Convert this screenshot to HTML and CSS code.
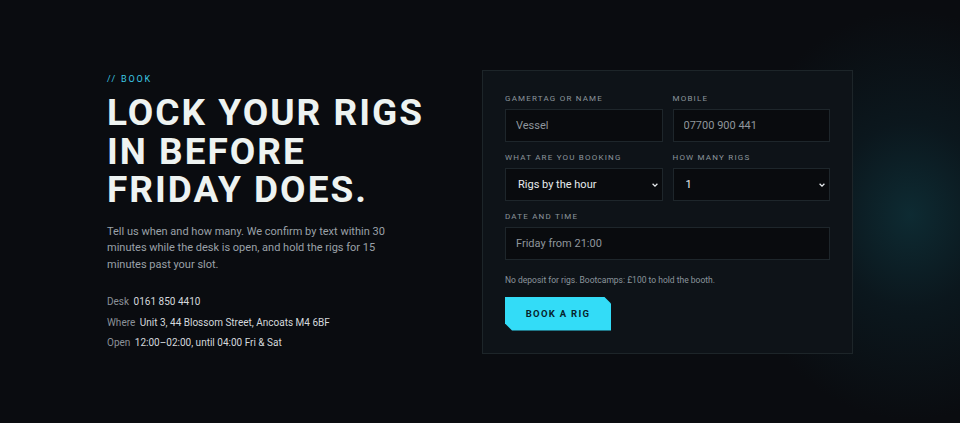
FILE: index.html
```html
<!DOCTYPE html>
<html lang="en">
<head>
    <meta charset="UTF-8">
    <meta name="viewport" content="width=device-width, initial-scale=1.0">
    <title>Book a rig</title>
    <link rel="stylesheet" href="styles.css">
</head>
<body>

<section class="booking">
    <div class="intro">
        <p class="eyebrow">// Book</p>
        <h1>Lock your rigs<br>in before<br>Friday does.</h1>
        <p class="lead">Tell us when and how many. We confirm by text within 30 minutes while the desk is open, and hold the rigs for 15 minutes past your slot.</p>
        <ul class="details">
            <li><span class="key">Desk</span> 0161 850 4410</li>
            <li><span class="key">Where</span> Unit 3, 44 Blossom Street, Ancoats M4 6BF</li>
            <li><span class="key">Open</span> 12:00–02:00, until 04:00 Fri &amp; Sat</li>
        </ul>
    </div>

    <form class="card" onsubmit="return false;">
        <div class="row">
            <label class="field">
                <span class="label">Gamertag or name</span>
                <input type="text" placeholder="Vessel">
            </label>
            <label class="field">
                <span class="label">Mobile</span>
                <input type="tel" placeholder="07700 900 441">
            </label>
        </div>
        <div class="row">
            <label class="field">
                <span class="label">What are you booking</span>
                <span class="select">
                    <select>
                        <option>Rigs by the hour</option>
                        <option>Bootcamp booth</option>
                    </select>
                    <svg viewBox="0 0 10 10" width="8" height="8"><path d="M2 3.5 L5 6.5 L8 3.5" fill="none" stroke="#e8ecef" stroke-width="1.6"/></svg>
                </span>
            </label>
            <label class="field">
                <span class="label">How many rigs</span>
                <span class="select">
                    <select>
                        <option>1</option>
                        <option>2</option>
                        <option>3</option>
                        <option>4</option>
                        <option>5</option>
                    </select>
                    <svg viewBox="0 0 10 10" width="8" height="8"><path d="M2 3.5 L5 6.5 L8 3.5" fill="none" stroke="#e8ecef" stroke-width="1.6"/></svg>
                </span>
            </label>
        </div>
        <label class="field">
            <span class="label">Date and time</span>
            <input type="text" placeholder="Friday from 21:00">
        </label>
        <p class="note">No deposit for rigs. Bootcamps: £100 to hold the booth.</p>
        <button class="button" type="submit">Book a rig</button>
    </form>
</section>

</body>
</html>
```

FILE: styles.css
```css
html, body {
    height: 100%;
}

body {
    font-family: 'Roboto', sans-serif;
    background-color: #0a0c10;
    background-image: radial-gradient(ellipse 175px 205px at 910px 215px, rgba(14, 46, 54, 0.9) 0, rgba(12, 32, 40, 0.55) 45%, rgba(10, 12, 16, 0) 100%);
    color: #e8ecef;
    margin: 0;
    padding: 0;
}

.booking {
    box-sizing: border-box;
    height: 100%;
    max-width: 746px;
    margin: 0 auto;
    display: grid;
    grid-template-columns: 1fr 371px;
    gap: 56px;
    align-items: center;
}

.eyebrow {
    margin: 0 0 9px;
    color: #3cc8e4;
    font-size: 9px;
    line-height: 12px;
    letter-spacing: 1.8px;
    text-transform: uppercase;
}

h1 {
    margin: 0;
    font-family: 'Roboto', sans-serif;
    font-weight: 700;
    font-size: 37px;
    line-height: 38.5px;
    letter-spacing: 2px;
    text-transform: uppercase;
    color: #eef3f1;
}

.lead {
    margin: 14px 0 22px;
    max-width: 282px;
    font-size: 11px;
    line-height: 16.5px;
    color: #9aa1a8;
}

.details {
    list-style: none;
    margin: 0;
    padding: 0;
    font-size: 10px;
    color: #d4d8dc;
}

.details li {
    margin-top: 7px;
    line-height: 13.5px;
}

.details li:first-child {
    margin-top: 0;
}

.details .key {
    color: #8a9198;
    margin-right: 2px;
}

.card {
    background-color: #0e1318;
    border: 1px solid #1d2529;
    padding: 23px 22px 22px 22px;
}

.row {
    display: grid;
    grid-template-columns: 1fr 1fr;
    gap: 10px;
}

.field {
    display: block;
    margin-bottom: 11px;
}

.label {
    display: block;
    font-size: 8px;
    line-height: 10px;
    letter-spacing: 1.2px;
    text-transform: uppercase;
    color: #8c959c;
    margin-bottom: 5px;
}

input, select {
    box-sizing: border-box;
    display: block;
    width: 100%;
    height: 33px;
    background-color: #090b0e;
    border: 1px solid #1e262b;
    border-radius: 0;
    padding: 0 10px;
    font-family: 'Roboto', sans-serif;
    font-size: 11px;
    color: #e8ecef;
    outline: none;
}

input::placeholder {
    color: #8f969c;
}

.select {
    display: block;
    position: relative;
}

select {
    -webkit-appearance: none;
    appearance: none;
    padding-left: 12px;
}

.select svg {
    position: absolute;
    right: 4px;
    top: 13px;
    pointer-events: none;
}

.note {
    margin: 15px 0 12px;
    font-size: 8.5px;
    line-height: 10px;
    color: #8c959c;
}

.button {
    display: block;
    width: 106px;
    height: 34px;
    background-color: #33dcf7;
    color: #07242c;
    border: none;
    cursor: pointer;
    font-family: 'Roboto', sans-serif;
    font-weight: 700;
    font-size: 9.5px;
    letter-spacing: 1.3px;
    text-transform: uppercase;
    clip-path: polygon(0 0, calc(100% - 7px) 0, 100% 7px, 100% 100%, 7px 100%, 0 calc(100% - 7px));
}

.button:hover {
    background-color: #5ae4fa;
}
```
